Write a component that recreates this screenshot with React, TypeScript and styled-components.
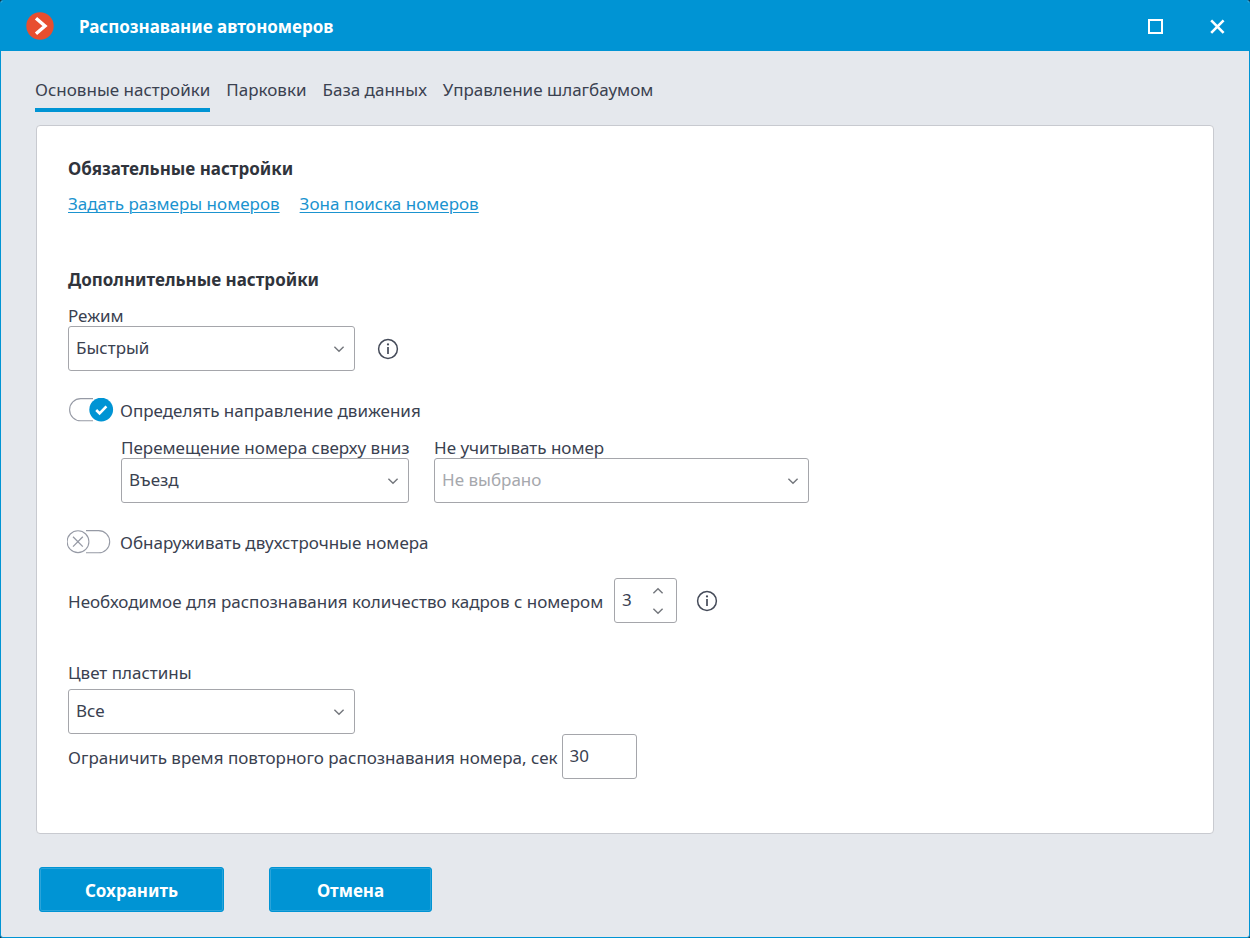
import React, { useState } from "react";
import styled, { createGlobalStyle } from "styled-components";

const blue = "#0094d4";
const ink = "#3a4150";
const line = "#a5a6ab";

const GlobalStyle = createGlobalStyle`
  *, *::before, *::after { box-sizing: border-box; }
  body {
    margin: 0;
    background: #16384a;
    color: ${ink};
    font-family: "Noto Sans", "Open Sans", sans-serif;
    font-size: 17px;
    line-height: 24px;
  }
  button, input, select { font: inherit; color: inherit; }
`;

const Window = styled.div`
  display: flex;
  flex-direction: column;
  min-height: 100vh;
  border: 1px solid ${blue};
  border-radius: 3px;
  background: #e5e8ed;
  overflow: hidden;
`;

const TitleBar = styled.header`
  display: flex;
  align-items: center;
  height: 50px;
  padding: 0 16px 0 25px;
  background: ${blue};
  color: #fff;
`;

const Title = styled.h1`
  flex: 1;
  margin: 0 0 0 25px;
  padding-top: 2px;
  font-size: 17px;
  font-weight: 700;
`;

const WindowButtons = styled.div`
  display: flex;
  gap: 30px;
`;

const IconButton = styled.button`
  display: flex;
  align-items: center;
  justify-content: center;
  padding: 0;
  border: 0;
  background: none;
  cursor: pointer;
`;

const WindowButton = styled(IconButton)`
  width: 32px;
  height: 32px;
`;

const Tabs = styled.nav`
  display: flex;
  gap: 16px;
  padding: 26px 34px 0;
`;

const Tab = styled.button<{ $active: boolean }>`
  height: 35px;
  padding: 0 0 5px;
  border: 0;
  border-bottom: 4px solid ${(p) => (p.$active ? blue : "transparent")};
  background: none;
  white-space: nowrap;
  cursor: pointer;
`;

const Panel = styled.main`
  flex: 1;
  margin: 13px 35px 0;
  padding: 31px 31px 54px;
  border: 1px solid #c8cad0;
  border-radius: 4px;
  background: #fff;
`;

const Heading = styled.h2`
  margin: 0;
  color: #30343c;
  font-size: 17px;
  font-weight: 700;
`;

const Links = styled.div`
  display: flex;
  gap: 20px;
  margin: 11px 0 52px;
`;

const Link = styled.a`
  color: #1b93cf;
  text-decoration: underline;
  text-decoration-thickness: 1px;
  text-underline-offset: 2px;
`;

const Row = styled.div<{ $top?: number; $indent?: number; $gap?: number; $align?: string }>`
  display: flex;
  align-items: ${(p) => p.$align ?? "center"};
  gap: ${(p) => p.$gap ?? 0}px;
  margin-top: ${(p) => p.$top ?? 0}px;
  padding-left: ${(p) => p.$indent ?? 0}px;
`;

const Field = styled.div<{ $width: number; $gap?: number }>`
  display: flex;
  flex-direction: column;
  gap: ${(p) => p.$gap ?? 0}px;
  width: ${(p) => p.$width}px;
`;

const FieldLabel = styled.label`
  line-height: 20px;
  white-space: nowrap;
`;

const InlineLabel = styled.label<{ $width?: number }>`
  min-width: ${(p) => p.$width ?? 0}px;
  padding-top: 2px;
  white-space: nowrap;
`;

const SelectBox = styled.div`
  display: grid;
  align-items: center;
  height: 45px;
  > * { grid-area: 1 / 1; }
  > svg {
    justify-self: end;
    margin-right: 10px;
    pointer-events: none;
  }
`;

const Select = styled.select<{ $muted?: boolean }>`
  appearance: none;
  width: 100%;
  height: 45px;
  padding: 0 30px 1px 7px;
  border: 1px solid ${line};
  border-radius: 3px;
  background: #fff;
  color: ${(p) => (p.$muted ? "#a6a8ad" : ink)};
`;

const InfoButton = styled(IconButton)`
  width: 22px;
  height: 45px;
`;

const ToggleLabel = styled.label`
  display: flex;
  align-items: center;
  gap: 6px;
  height: 24px;
  margin-left: -1px;
  cursor: pointer;
`;

const ToggleInput = styled.input`
  appearance: none;
  width: 0;
  height: 0;
  margin: 0 -6px 0 0;
`;

const ToggleText = styled.span`
  padding-top: 2px;
`;

const Stepper = styled.div`
  display: flex;
  width: 63px;
  height: 45px;
  border: 1px solid ${line};
  border-radius: 3px;
`;

const StepperInput = styled.input`
  appearance: textfield;
  width: 32px;
  padding: 0 0 2px 7px;
  border: 0;
  background: none;
  &::-webkit-inner-spin-button { appearance: none; margin: 0; }
`;

const StepperButtons = styled.div`
  display: flex;
  flex-direction: column;
  justify-content: space-between;
  padding: 2px 0;
`;

const StepButton = styled(IconButton)`
  width: 22px;
  height: 19px;
`;

const TextInput = styled.input`
  width: 75px;
  height: 45px;
  padding: 0 7px 2px;
  border: 1px solid ${line};
  border-radius: 3px;
  background: #fff;
`;

const Footer = styled.footer`
  display: flex;
  gap: 45px;
  padding: 33px 38px 25px;
`;

const ActionButton = styled.button<{ $width: number }>`
  width: ${(p) => p.$width}px;
  height: 45px;
  padding: 2px 0 0;
  border: 1px solid ${blue};
  border-radius: 3px;
  background: ${blue};
  box-shadow: inset 0 0 0 1px #2ba4da;
  color: #fff;
  font-weight: 700;
  cursor: pointer;
`;

const Logo = () => (
  <svg width="28" height="28" viewBox="0 0 28 28" aria-hidden="true">
    <circle cx="14" cy="14" r="13.7" fill="#e84e2f" />
    <path d="M10 6.2 19 14l-9 7.8" fill="none" stroke="#fff" strokeWidth="3.4" />
  </svg>
);

const Chevron = ({ up = false }: { up?: boolean }) => (
  <svg width="12" height="8" viewBox="0 0 12 8" fill="none" stroke="#74777d" strokeWidth="1.4" aria-hidden="true">
    <path d={up ? "M1.4 6.3 6 1.7l4.6 4.6" : "M1.4 1.7 6 6.3l4.6-4.6"} />
  </svg>
);

const Info = () => (
  <InfoButton type="button" aria-label="Справка">
    <svg width="22" height="22" viewBox="0 0 22 22" aria-hidden="true">
      <circle cx="11" cy="11" r="9.4" fill="none" stroke="#454b59" strokeWidth="1.5" />
      <path d="M11 9v7" stroke="#454b59" strokeWidth="1.7" />
      <circle cx="11" cy="6.4" r="1.1" fill="#454b59" />
    </svg>
  </InfoButton>
);

function Toggle({ label, initial }: { label: string; initial: boolean }) {
  const [on, setOn] = useState(initial);
  return (
    <ToggleLabel>
      <ToggleInput type="checkbox" role="switch" checked={on} onChange={() => setOn(!on)} />
      <svg width="47" height="24" viewBox="0 0 47 24" fill="none" aria-hidden="true">
        {on ? (
          <>
            <path d="M26 .6H13.7a11.1 11.1 0 0 0 0 22.2H26" stroke="#969aa5" strokeWidth="1.1" />
            <circle cx="34.2" cy="11.6" r="11.9" fill={blue} />
            <path d="m29.2 12 3.4 3.5 6.8-7.1" stroke="#fff" strokeWidth="2.6" />
          </>
        ) : (
          <>
            <path d="M19 .6h12.6a11.1 11.1 0 0 1 0 22.2H19" stroke="#969aa5" strokeWidth="1.1" />
            <circle cx="11" cy="11.7" r="10.9" fill="#fff" stroke="#969aa5" strokeWidth="1.1" />
            <path d="m6 6.8 9.8 9.8m0-9.8L6 16.6" stroke="#969aa5" strokeWidth="1.3" />
          </>
        )}
      </svg>
      <ToggleText>{label}</ToggleText>
    </ToggleLabel>
  );
}

interface DropDownProps {
  id: string;
  label: string;
  options: string[];
  width: number;
  gap?: number;
  muted?: boolean;
}

const DropDown = ({ id, label, options, width, gap, muted }: DropDownProps) => (
  <Field $width={width} $gap={gap}>
    <FieldLabel htmlFor={id}>{label}</FieldLabel>
    <SelectBox>
      <Select id={id} $muted={muted}>
        {options.map((o) => (
          <option key={o}>{o}</option>
        ))}
      </Select>
      <Chevron />
    </SelectBox>
  </Field>
);

const tabs = ["Основные настройки", "Парковки", "База данных", "Управление шлагбаумом"];

export default function App() {
  const [active, setActive] = useState(0);
  const [frames, setFrames] = useState(3);

  return (
    <>
      <GlobalStyle />
      <Window>
        <TitleBar>
          <Logo />
          <Title>Распознавание автономеров</Title>
          <WindowButtons>
            <WindowButton type="button" aria-label="Развернуть">
              <svg width="16" height="16" viewBox="0 0 16 16" aria-hidden="true">
                <rect x="2" y="2" width="13" height="13" fill="none" stroke="#fff" strokeWidth="2" />
              </svg>
            </WindowButton>
            <WindowButton type="button" aria-label="Закрыть">
              <svg width="16" height="16" viewBox="0 0 16 16" aria-hidden="true">
                <path d="m2.2 2.4 12.4 12.4m0-12.4L2.2 14.8" stroke="#fff" strokeWidth="2.6" />
              </svg>
            </WindowButton>
          </WindowButtons>
        </TitleBar>

        <Tabs>
          {tabs.map((t, i) => (
            <Tab key={t} type="button" $active={i === active} onClick={() => setActive(i)}>
              {t}
            </Tab>
          ))}
        </Tabs>

        <Panel>
          <Heading>Обязательные настройки</Heading>
          <Links>
            <Link href="#sizes">Задать размеры номеров</Link>
            <Link href="#zone">Зона поиска номеров</Link>
          </Links>

          <Heading>Дополнительные настройки</Heading>
          <Row $top={14} $gap={22} $align="flex-end">
            <DropDown id="mode" label="Режим" options={["Быстрый"]} width={287} />
            <Info />
          </Row>

          <Row $top={27}>
            <Toggle label="Определять направление движения" initial />
          </Row>
          <Row $top={16} $indent={53} $gap={25}>
            <DropDown id="direction" label="Перемещение номера сверху вниз" options={["Въезд", "Выезд"]} width={288} />
            <DropDown id="ignore" label="Не учитывать номер" options={["Не выбрано"]} width={375} muted />
          </Row>

          <Row $top={27}>
            <Toggle label="Обнаруживать двухстрочные номера" initial={false} />
          </Row>

          <Row $top={24}>
            <InlineLabel htmlFor="frames" $width={546}>
              Необходимое для распознавания количество кадров с номером
            </InlineLabel>
            <Row $gap={19}>
              <Stepper>
                <StepperInput
                  id="frames"
                  type="number"
                  value={frames}
                  onChange={(e) => setFrames(Number(e.target.value))}
                />
                <StepperButtons>
                  <StepButton type="button" aria-label="Больше" onClick={() => setFrames(frames + 1)}>
                    <Chevron up />
                  </StepButton>
                  <StepButton type="button" aria-label="Меньше" onClick={() => setFrames(frames - 1)}>
                    <Chevron />
                  </StepButton>
                </StepperButtons>
              </Stepper>
              <Info />
            </Row>
          </Row>

          <Row $top={40}>
            <DropDown id="plate" label="Цвет пластины" options={["Все"]} width={287} gap={6} />
          </Row>
          <Row $gap={4}>
            <InlineLabel htmlFor="limit">
              Ограничить время повторного распознавания номера, сек
            </InlineLabel>
            <TextInput id="limit" type="text" defaultValue="30" />
          </Row>
        </Panel>

        <Footer>
          <ActionButton type="submit" $width={185}>Сохранить</ActionButton>
          <ActionButton type="button" $width={163}>Отмена</ActionButton>
        </Footer>
      </Window>
    </>
  );
}
